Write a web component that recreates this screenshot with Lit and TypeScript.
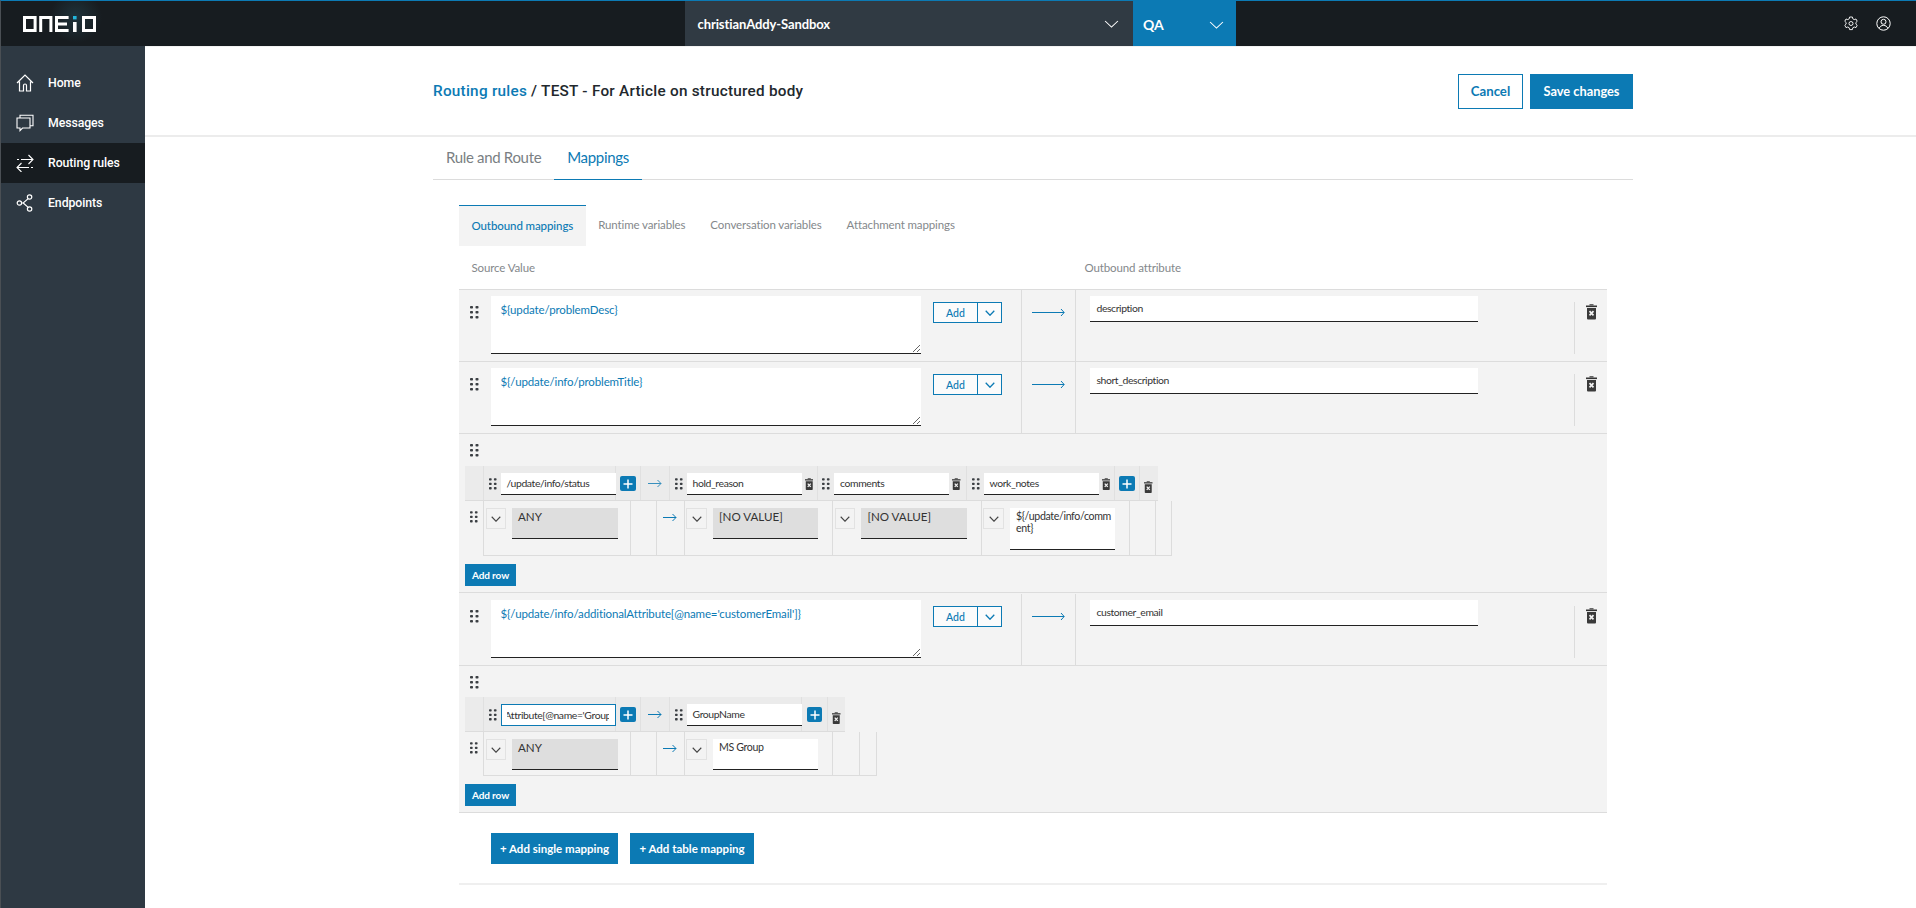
import { LitElement, html, css, svg } from "lit";
import { customElement } from "lit/decorators.js";

const chevron = (c = "#fff", w = 15, h = 8, sw = 1) => html`<svg width=${w} height=${h} viewBox="0 0 14 8" fill="none" preserveAspectRatio="none"><path d="M1 1l6 6 6-6" stroke=${c} stroke-width=${sw}/></svg>`;
const handle = () => html`<svg class="handle" width="9" height="13" viewBox="0 0 9 13" fill="#3b3f43">${[0, 5, 10].map((y) => svg`<rect x="0" y=${y} width="3" height="2.6" rx=".8"/><rect x="5.5" y=${y} width="3" height="2.6" rx=".8"/>`)}</svg>`;
const trash = (w = 11, h = 16) => html`<svg class="trash" width=${w} height=${h} viewBox="0 0 11 16"><rect x="3.5" y="0" width="4" height="1.5" fill="#666"/><rect x="0" y="1.5" width="11" height="1.6" fill="#333"/><path d="M1 4h9v10.6a1 1 0 0 1-1 1H2a1 1 0 0 1-1-1z" fill="#3a3a3a"/><path d="M3.500 7.200l4 4.200M7.500 7.200l-4 4.200" stroke="#f2f2f2" stroke-width="1.700"/></svg>`;
const plusBtn = () => html`<span class="plus"><svg width="10" height="10" viewBox="0 0 10 10"><path d="M5 .5v9M.5 5h9" stroke="#fff" stroke-width="1.5"/></svg></span>`;
const longArrow = () => html`<svg width="33" height="9" viewBox="0 0 33 9" fill="none"><path d="M0 4.5h32M29 1l3.2 3.5L29 8" stroke="#0c7ab4" stroke-width="1"/></svg>`;
const shortArrow = (o = 0.8) => html`<svg width="14" height="9" viewBox="0 0 14 9" fill="none" opacity=${o}><path d="M0 4.5h13M9.5 1l3.5 3.5L9.5 8" stroke="#0c7ab4" stroke-width="1"/></svg>`;

const logo = html`<svg class="logo" width="73" height="16" viewBox="0 0 73 16" fill="#fff">
  <path fill-rule="evenodd" d="M0 0h13.6v16H0zM3 3v10h7.6V3z"/>
  <path d="M16.2 0h13.2v16h-3V3h-7.2v13h-3z"/>
  <path d="M32 0h13.6v3H35v3.4h9v3h-9V13h10.6v3H32z"/>
  <rect x="50" y="0" width="3.6" height="3.4" fill="#22b6dc"/><rect x="50" y="6" width="3.6" height="10"/>
  <path fill-rule="evenodd" d="M59 0h14v16H59zM62 3v10h8V3z"/>
</svg>`;

const navIcons = {
  home: html`<svg width="18" height="18" viewBox="0 0 18 18" fill="none" stroke="#fff" stroke-width="1.200"><path d="M1 9l8-8 8 8M3.500 7.500V17h4v-5.500a1.500 1.500 0 0 1 3 0V17h4V7.500"/></svg>`,
  msg: html`<svg width="18" height="18" viewBox="0 0 18 18" fill="none" stroke="#fff" stroke-width="1.100"><path d="M4 4V1.200h13v10.600h-3"/><path d="M1 4h13v10H6.500L4 16.600V14H1z"/></svg>`,
  route: html`<svg width="18" height="18" viewBox="0 0 18 18" fill="none" stroke="#fff" stroke-width="1.100"><path d="M1 5.500h2M5 5.500h12M12.500 1l4.500 4.500-4.500 4.500"/><path d="M17 13.500h-2M13 13.500H1M5.500 9l-4.500 4.500L5.500 18"/></svg>`,
  end: html`<svg width="18" height="18" viewBox="0 0 18 18" fill="none" stroke="#fff" stroke-width="1.200"><circle cx="3.400" cy="9" r="2.200"/><circle cx="13.600" cy="3" r="2.200"/><circle cx="13.600" cy="15" r="2.200"/><path d="M5.600 9h1.600l5-4.400M7.200 9l5 4.400"/></svg>`,
};

const selField = (text: string, cls = "") => html`<span class="sel">${chevron("#444", 10, 6, 1.5)}</span><span class=${"field " + cls}>${text}</span>`;

@customElement("app-root")
export class AppRoot extends LitElement {
  static styles = css`
    :host { display: block; font-family: Lato, "Liberation Sans", sans-serif; color: #333; }
    * { box-sizing: border-box; }
    .app { width: 1916px; height: 908px; overflow: hidden; display: grid; grid-template-rows: 46px 1fr; grid-template-columns: 145px 1fr; background: #fff; }
    .top { grid-column: 1 / 3; display: flex; background: #171c20; border-top: 1px solid #0c7ab4; border-left: 1px solid #4a4f54; color: #fff; }
    .logo-cell { width: 684px; padding: 15px 0 0 22px; background: radial-gradient(circle 26px at 75px 16px, #1f333b, transparent); }
    .org { width: 448px; background: #303a43; display: flex; align-items: center; justify-content: space-between; padding: 0 14px 0 12.5px; font-size: 13px; font-weight: 700; letter-spacing: -0.1px; }
    .qa { width: 103px; background: #0c7ab4; display: flex; align-items: center; justify-content: space-between; padding: 2px 12px 0 10px; font-size: 14px; font-weight: 700; }
    .top-icons { flex: 1; display: flex; align-items: center; justify-content: flex-end; gap: 17.5px; padding-right: 25.5px; }
    .side { background: #2e3943; border-left: 1px solid #4a4f54; padding-top: 17px; color: #fff; }
    .nav { height: 40px; display: flex; align-items: center; padding: 0 0 1px 15px; gap: 14px; font-family: Roboto, sans-serif; font-weight: 500; font-size: 12.3px; letter-spacing: -.08px; }
    .nav.on { background: #171c20; }
    .main { min-width: 0; }
    .page-head { height: 91px; border-bottom: 2px solid #ececec; border-top: 1px solid #f2f2f2; padding: 0 283px 0 288px; display: flex; align-items: center; justify-content: space-between; }
    .title { font-family: Roboto, sans-serif; font-weight: 500; font-size: 15.3px; letter-spacing: .26px; color: #22282d; }
    .title b { font-weight: 500; color: #0c7ab4; }
    .acts { display: flex; gap: 7px; }
    .btn { height: 35px; display: flex; align-items: center; justify-content: center; font-weight: 700; }
    .cancel { width: 65px; border: 1px solid #0c7ab4; color: #0c7ab4; background: #fff; font-size: 13.2px; }
    .save { width: 103px; background: #0c7ab4; color: #fff; font-size: 12.8px; }
    .content { margin-left: 288px; width: 1200px; }
    .tabs { display: flex; height: 43px; border-bottom: 1px solid #dcdcdc; }
    .tab { padding: 0 13px 3px; display: flex; align-items: center; font-size: 15px; letter-spacing: -.33px; color: #7a7f83; }
    .tab.on { color: #0c7ab4; border-bottom: 1.5px solid #0c7ab4; margin-bottom: -1px; }
    .panel { margin: 25px 0 0 26px; width: 1148px; border-bottom: 2px solid #efefef; padding-bottom: 19px; }
    .subs { display: flex; height: 41px; font-size: 11.5px; letter-spacing: -.12px; color: #84888b; }
    .sub { padding: 0 12.5px 2px; display: flex; align-items: center; }
    .sub.on { background: #f3f3f3; border-top: 1px solid #0c7ab4; color: #0c7ab4; font-weight: 500; letter-spacing: -.1px; }
    .cols { display: grid; grid-template-columns: 613px 1fr; height: 43px; align-items: center; font-size: 11.5px; letter-spacing: -.13px; color: #84888b; }
    .cols span { padding-left: 12.5px; }
    .row { display: flex; height: 72px; background: #f3f3f3; border-top: 1px solid #dcdcdc; }
    .row.last { height: 73px; padding-top: 1px; }
    .drag { width: 32px; padding: 16px 0 0 11px; flex: none; }
    .handle { display: block; }
    .src { width: 530px; display: flex; gap: 12px; padding-top: 6px; flex: none; }
    textarea { display: block; width: 430px; height: 58px; padding: 6px 9.5px; border: 0; border-bottom: 1px solid #222; border-radius: 0; background: #fff; color: #0c7ab4; font: 11.5px/16px Lato, sans-serif; letter-spacing: -.13px; resize: vertical; outline: none; }
    .add { width: 69px; height: 21px; margin-top: 6px; border: 1px solid #0c7ab4; display: flex; background: #fbfbfb; color: #0c7ab4; font-size: 10.5px; font-weight: 500; }
    .add span { width: 44px; display: flex; align-items: center; justify-content: center; border-right: 1px solid #0c7ab4; }
    .add i { flex: 1; display: flex; align-items: center; justify-content: center; }
    .arrow-cell { width: 55px; flex: none; border-left: 1px solid #dcdcdc; border-right: 1px solid #dcdcdc; display: flex; justify-content: center; padding-top: 18px; }
    .attr { width: 498px; flex: none; padding: 6px 0 0 14px; }
    .attr div { width: 388px; height: 26px; padding: 0 6.5px; background: #fff; border-bottom: 1px solid #222; font-size: 10.4px; letter-spacing: -.4px; line-height: 24px; color: #333; }
    .del { width: 33px; flex: none; margin-top: 12px; height: 52px; display: flex; justify-content: center; padding-top: 2px; border-left: 1px solid #dcdcdc; }
    .tbl { background: #f3f3f3; border-top: 1px solid #dcdcdc; padding: 10px 6px 6px; }
    .tbl.b { border-bottom: 1px solid #dcdcdc; }
    .tbl .top-drag { height: 12px; padding-left: 5px; }
    .thead { display: flex; margin-top: 10px; height: 35px; background: #ebebeb; border-bottom: 1px solid #dcdcdc; width: max-content; }
    .tbl.b .thead { margin-top: 9px; }
    .hc { flex: none; height: 100%; display: flex; align-items: center; border-right: 1px solid #e0e0e0; padding-top: 1px; }
    .hc:last-child { border-right: 0; }
    .hc .handle { width: 8px; height: 12px; margin: 0 4px 0 4.5px; flex: none; }
    .hi { width: 115px; height: 22px; flex: none; background: #fff; border-bottom: 1px solid #222; padding: 0 6px; font-size: 10.4px; letter-spacing: -.38px; line-height: 21px; color: #333; white-space: nowrap; overflow: hidden; }
    .hi.focus { border: 1px solid #0c7ab4; padding: 0 6px 0 5px; display: flex; }
    .hi.focus div { flex: 1; min-width: 0; overflow: hidden; display: flex; justify-content: flex-end; }
    .hi.focus span { flex: none; margin-right: -2.5px; }
    .hc .trash { margin-left: 3px; margin-top: 2px; flex: none; }
    .ctr { justify-content: center; }
    .hc.low .trash { margin: 8px 0 0 0; }
    .plus { width: 15.5px; height: 15px; background: #0c7ab4; border-radius: 2px; display: flex; align-items: center; justify-content: center; flex: none; }
    .tbody { display: flex; }
    .tbody .bd { width: 18px; padding: 10px 0 0 5px; flex: none; }
    .tbody .bd .handle { width: 8px; height: 12px; }
    .bc { flex: none; height: 55px; border-right: 1px solid #dcdcdc; border-bottom: 1px solid #dcdcdc; display: flex; align-items: flex-start; padding: 7px 0 0 1.5px; gap: 6px; }
    .tbl.b .bc { height: 44px; }
    .bc.first { border-left: 1px solid #dcdcdc; }
    .bc.arr { justify-content: center; padding: 12px 0 0; }
    .sel { width: 20.5px; height: 21px; border: 1px solid #e2e2e2; display: flex; align-items: center; justify-content: center; flex: none; }
    .field { width: 105.5px; height: 31px; flex: none; border-bottom: 1px solid #222; background: #fff; padding: 3px 3px 0 6px; font-size: 10.6px; letter-spacing: -.35px; line-height: 11.5px; color: #333; word-break: break-all; }
    .field.grey { background: #dedede; font-size: 11.6px; letter-spacing: 0; }
    .field.tall { height: 42px; }
    .addrow { margin-top: 8px; width: 51px; height: 22px; background: #0c7ab4; color: #fff; font-size: 10px; letter-spacing: -.1px; font-weight: 700; display: flex; align-items: center; justify-content: center; }
    .foot { display: flex; gap: 12px; padding: 20px 0 0 32px; }
    .big { height: 31px; background: #0c7ab4; color: #fff; font-size: 11.5px; font-weight: 700; display: flex; align-items: center; justify-content: center; }
  `;

  private single(src: string, attr: string, last = false) {
    return html`<div class=${"row" + (last ? " last" : "")}>
      <div class="drag">${handle()}</div>
      <div class="src"><textarea readonly .value=${src}></textarea>
        <div class="add"><span>Add</span><i>${chevron("#0c7ab4", 10, 6, 1.8)}</i></div></div>
      <div class="arrow-cell">${longArrow()}</div>
      <div class="attr"><div>${attr}</div></div>
      <div class="del">${trash()}</div>
    </div>`;
  }

  private headCell(w: number, label: string, after: "trash" | "plus" | "none") {
    return html`<div class="hc" style="width:${w}px">${handle()}<div class="hi">${label}</div>
      ${after === "trash" ? trash(8.5, 12.5) : after === "plus" ? html`<span style="margin-left:5px">${plusBtn()}</span>` : ""}</div>`;
  }

  render() {
    return html`<div class="app">
      <header class="top">
        <div class="logo-cell">${logo}</div>
        <div class="org"><span>christianAddy-Sandbox</span>${chevron()}</div>
        <div class="qa"><span>QA</span>${chevron()}</div>
        <div class="top-icons">
          <svg width="14" height="15" viewBox="0 0 14 15" fill="none" stroke="#fff" stroke-width=".9"><path d="M5.600 1h2.800l.4 1.800 1.400.8 1.800-.6 1.200 2.300-1.300 1.200v1.600l1.300 1.200-1.200 2.300-1.800-.6-1.400.8-.4 1.800H5.600l-.4-1.800-1.400-.8-1.800.6L.8 9.300l1.300-1.200V6.500L.8 5.300 2 3l1.800.6 1.400-.8z"/><circle cx="7" cy="7.500" r="2"/></svg>
          <svg width="15" height="15" viewBox="0 0 15 15" fill="none" stroke="#fff" stroke-width="1"><circle cx="7.500" cy="7.500" r="6.700"/><circle cx="7.500" cy="5.800" r="2.500"/><path d="M3.200 12.400c.6-2 2.300-3 4.300-3s3.700 1 4.300 3"/></svg>
        </div>
      </header>
      <nav class="side">
        <div class="nav">${navIcons.home}<span>Home</span></div>
        <div class="nav">${navIcons.msg}<span>Messages</span></div>
        <div class="nav on">${navIcons.route}<span>Routing rules</span></div>
        <div class="nav">${navIcons.end}<span>Endpoints</span></div>
      </nav>
      <main class="main">
        <div class="page-head">
          <div class="title"><b>Routing rules</b> / TEST - For Article on structured body</div>
          <div class="acts"><div class="btn cancel">Cancel</div><div class="btn save">Save changes</div></div>
        </div>
        <div class="content">
          <div class="tabs"><div class="tab">Rule and Route</div><div class="tab on">Mappings</div></div>
          <div class="panel">
            <div class="subs">
              <div class="sub on">Outbound mappings</div><div class="sub">Runtime variables</div>
              <div class="sub">Conversation variables</div><div class="sub">Attachment mappings</div>
            </div>
            <div class="cols"><span>Source Value</span><span>Outbound attribute</span></div>
            ${this.single("${update/problemDesc}", "description")}
            ${this.single("${/update/info/problemTitle}", "short_description")}
            <div class="tbl">
              <div class="top-drag">${handle()}</div>
              <div class="thead">
                <div class="hc" style="width:19px"></div>
                <div class="hc" style="width:132px">${handle()}<div class="hi">/update/info/status</div></div>
                <div class="hc ctr" style="width:25px">${plusBtn()}</div>
                <div class="hc ctr" style="width:29px">${shortArrow()}</div>
                ${this.headCell(147.5, "hold_reason", "trash")}
                ${this.headCell(149.5, "comments", "trash")}
                ${this.headCell(148, "work_notes", "trash")}
                <div class="hc ctr" style="width:24.5px">${plusBtn()}</div>
                <div class="hc ctr low" style="width:18px">${trash(8.5, 12.5)}</div>
              </div>
              <div class="tbody">
                <div class="bd">${handle()}</div>
                <div class="bc first" style="width:148px">${selField("ANY", "grey")}</div>
                <div class="bc" style="width:25.6px"></div>
                <div class="bc arr" style="width:28.4px">${shortArrow(1)}</div>
                <div class="bc" style="width:148.4px">${selField("[NO VALUE]", "grey")}</div>
                <div class="bc" style="width:148.6px">${selField("[NO VALUE]", "grey")}</div>
                <div class="bc" style="width:148.5px">${selField("${/update/info/comment}", "tall")}</div>
                <div class="bc" style="width:26px"></div>
                <div class="bc" style="width:16px"></div>
              </div>
              <div class="addrow">Add row</div>
            </div>
            ${this.single("${/update/info/additionalAttribute[@name='customerEmail']}", "customer_email", true)}
            <div class="tbl b">
              <div class="top-drag">${handle()}</div>
              <div class="thead">
                <div class="hc" style="width:19px"></div>
                <div class="hc" style="width:132px">${handle()}<div class="hi focus"><div><span>Attribute[@name='Group</span></div></div></div>
                <div class="hc ctr" style="width:25px">${plusBtn()}</div>
                <div class="hc ctr" style="width:29px">${shortArrow(1)}</div>
                ${this.headCell(132, "GroupName", "none")}
                <div class="hc ctr" style="width:26px">${plusBtn()}</div>
                <div class="hc ctr low" style="width:17px">${trash(8.5, 12.5)}</div>
              </div>
              <div class="tbody">
                <div class="bd">${handle()}</div>
                <div class="bc first" style="width:148px">${selField("ANY", "grey")}</div>
                <div class="bc" style="width:25.6px"></div>
                <div class="bc arr" style="width:28.4px">${shortArrow(1)}</div>
                <div class="bc" style="width:148.4px">${selField("MS Group")}</div>
                <div class="bc" style="width:26.6px"></div>
                <div class="bc" style="width:16.6px"></div>
              </div>
              <div class="addrow">Add row</div>
            </div>
            <div class="foot">
              <div class="big" style="width:127px">+ Add single mapping</div>
              <div class="big" style="width:124px">+ Add table mapping</div>
            </div>
          </div>
        </div>
      </main>
    </div>`;
  }
}
